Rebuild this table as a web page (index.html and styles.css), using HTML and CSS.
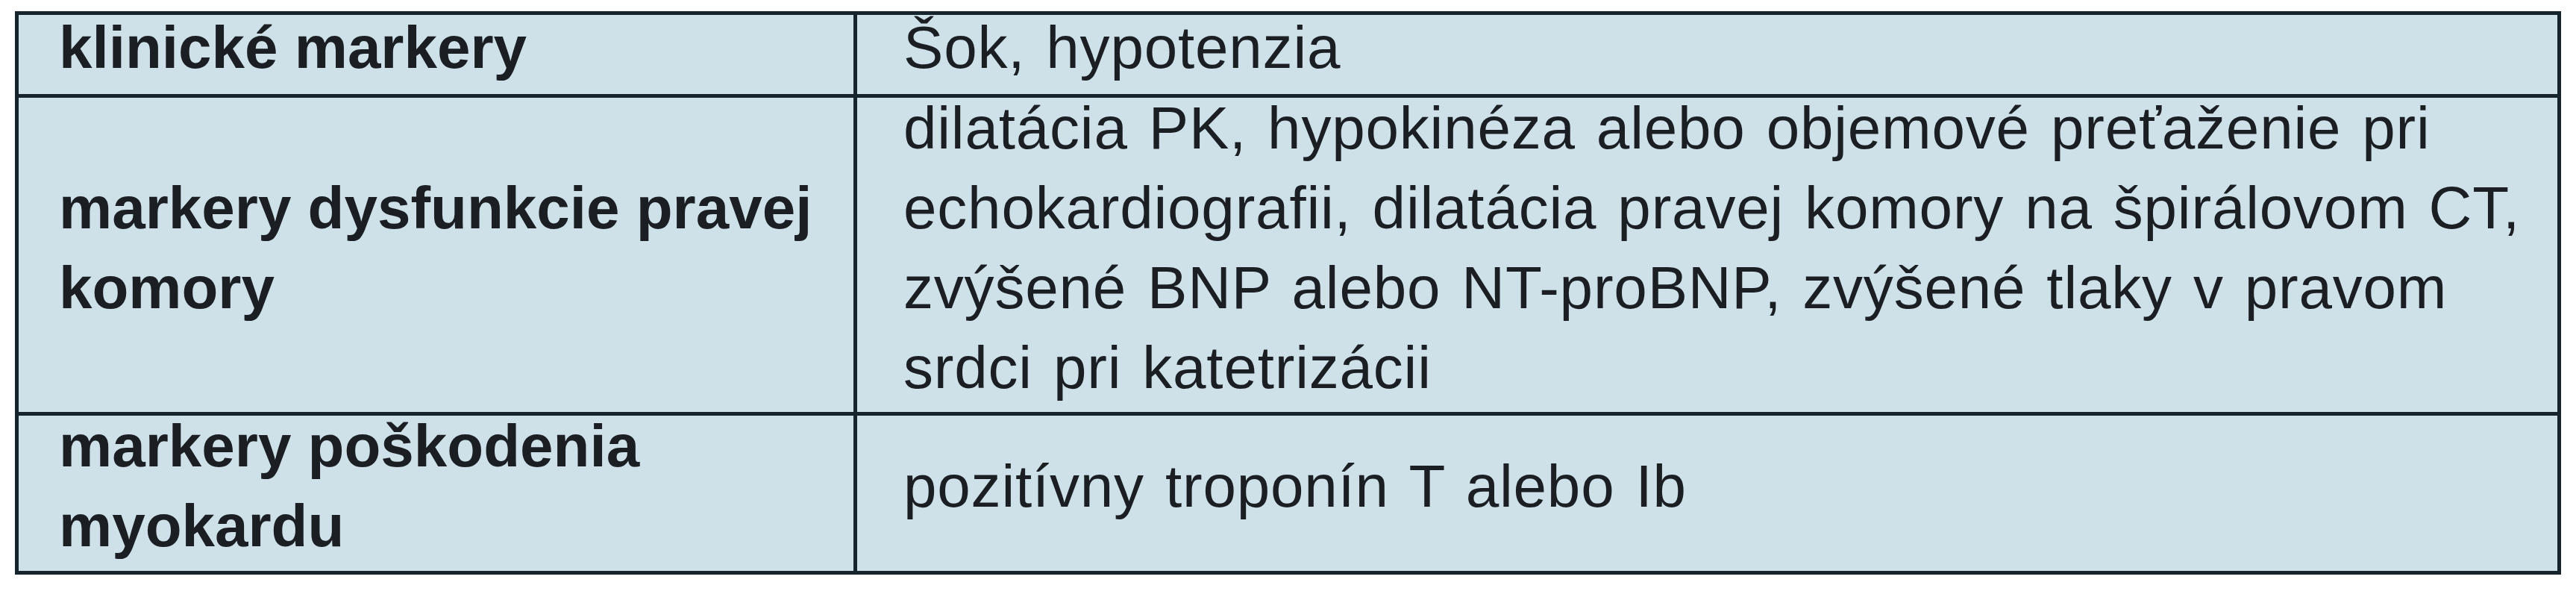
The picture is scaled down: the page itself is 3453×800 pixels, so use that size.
FILE: index.html
```html
<!DOCTYPE html>
<html lang="sk">
<head>
<meta charset="utf-8">
<title>Markery</title>
<link rel="stylesheet" href="styles.css">
</head>
<body>
<div class="tbl">
  <div class="cell label">klinické markery</div>
  <div class="cell value">Šok, hypotenzia</div>
  <div class="cell label">markery dysfunkcie pravej<br>komory</div>
  <div class="cell value">dilatácia PK, hypokinéza alebo objemové preťaženie pri<br>echokardiografii, dilatácia pravej komory na špirálovom CT,<br>zvýšené BNP alebo NT-proBNP, zvýšené tlaky v pravom<br>srdci pri katetrizácii</div>
  <div class="cell label">markery poškodenia<br>myokardu</div>
  <div class="cell value">pozitívny troponín T alebo Ib</div>
</div>
</body>
</html>
```
FILE: styles.css
```css
html, body {
  margin: 0;
  padding: 0;
  background: #ffffff;
}
body {
  font-family: "Liberation Sans", Arial, sans-serif;
  color: #1b1f23;
}
.tbl {
  margin: 15px 0 0 20px;
  width: 3413px;
  box-sizing: border-box;
  display: grid;
  grid-template-columns: 1119px 1fr;
  grid-template-rows: 106px 421px 208px;
  gap: 5px;
  padding: 5px;
  background: #15242d;
}
.cell {
  background: #cee1e9;
  display: flex;
  align-items: center;
  box-sizing: border-box;
  padding-bottom: 20px;
  font-size: 80px;
  line-height: 107px;
  white-space: nowrap;
}
.label {
  font-weight: bold;
  padding-left: 54px;
}
.value {
  padding-left: 62px;
  letter-spacing: 0.8px;
  word-spacing: 5px;
}
```
